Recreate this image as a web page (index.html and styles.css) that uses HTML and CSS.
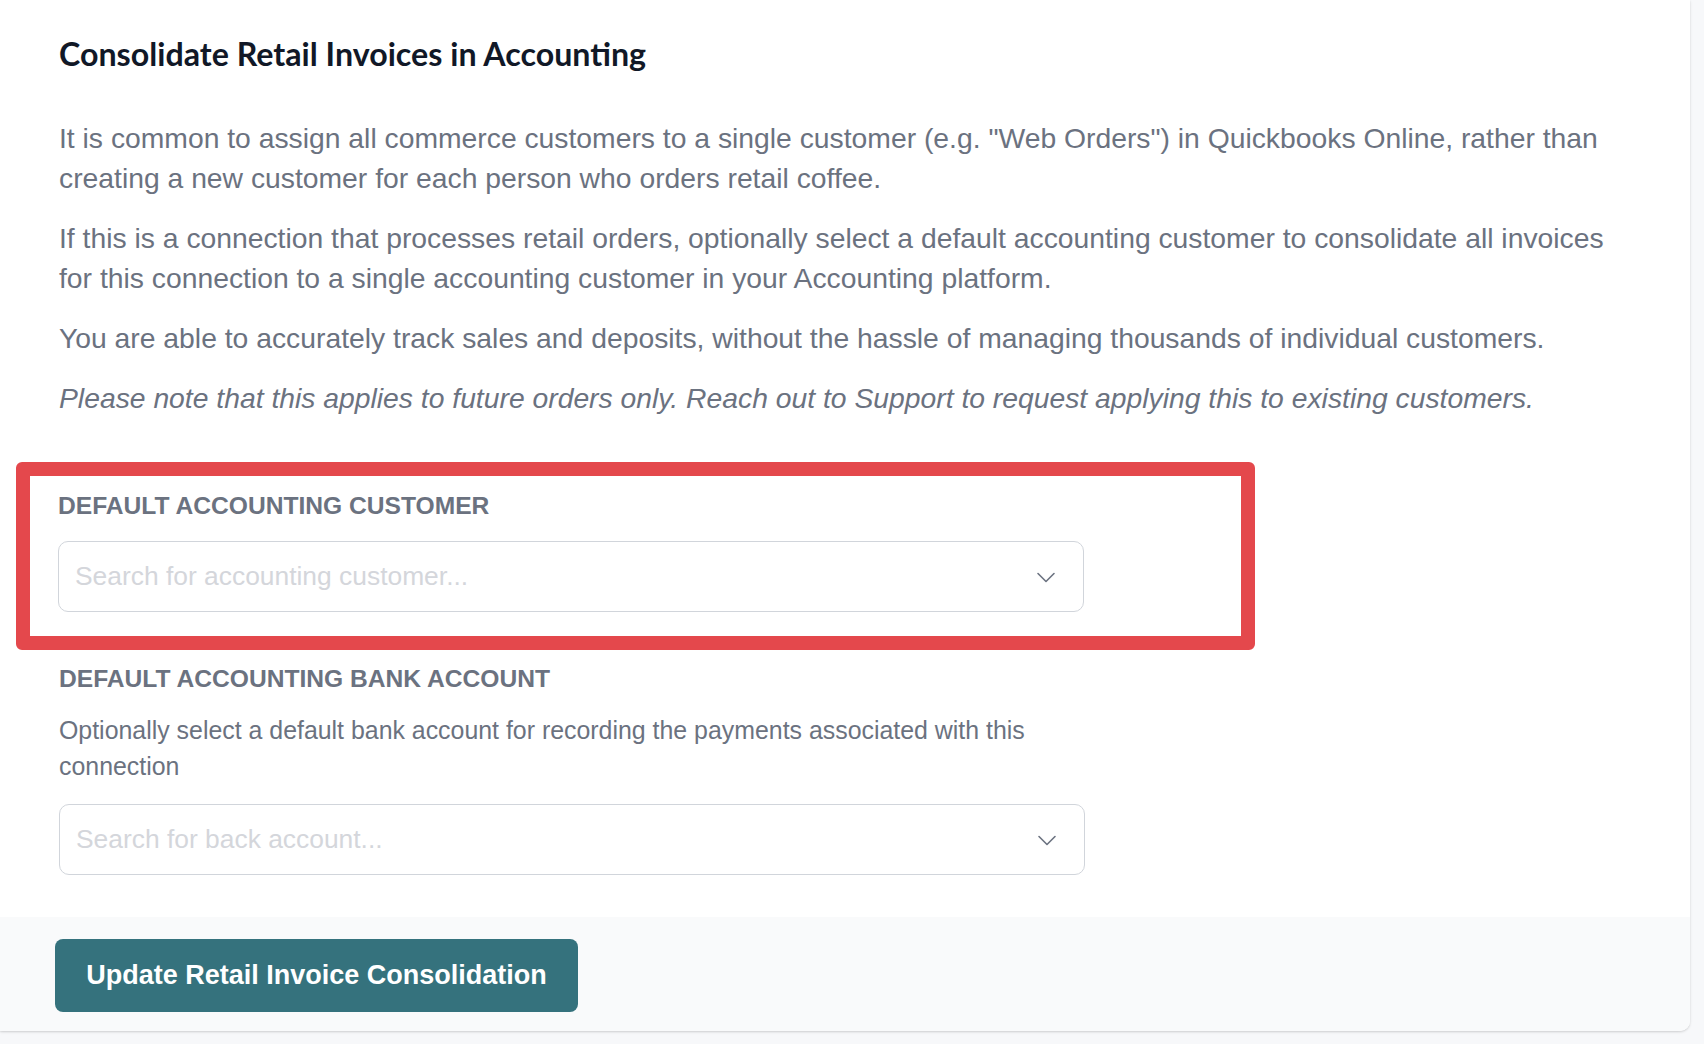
FILE: index.html
```html
<!DOCTYPE html>
<html lang="en">
<head>
<meta charset="utf-8">
<title>Consolidate Retail Invoices in Accounting</title>
<link rel="stylesheet" href="styles.css">
</head>
<body>
<div class="card">
  <div class="card-body">
    <h2 class="title">Consolidate Retail Invoices in Accounting</h2>
    <div class="intro">
      <p>It is common to assign all commerce customers to a single customer (e.g. "Web Orders") in Quickbooks Online, rather than creating a new customer for each person who orders retail coffee.</p>
      <p>If this is a connection that processes retail orders, optionally select a default accounting customer to consolidate all invoices for this connection to a single accounting customer in your Accounting platform.</p>
      <p>You are able to accurately track sales and deposits, without the hassle of managing thousands of individual customers.</p>
      <p class="note">Please note that this applies to future orders only. Reach out to Support to request applying this to existing customers.</p>
    </div>
    <div class="highlight">
      <div class="field-label">DEFAULT ACCOUNTING CUSTOMER</div>
      <div class="select">
        <span class="placeholder">Search for accounting customer...</span>
        <svg class="chevron" width="22" height="22" viewBox="0 0 22 22" fill="none"><path d="M3 7.5l8 8 8-8" stroke="#6b7280" stroke-width="1.6" stroke-linecap="round" stroke-linejoin="round"/></svg>
      </div>
    </div>
    <div class="field">
      <div class="field-label">DEFAULT ACCOUNTING BANK ACCOUNT</div>
      <p class="field-desc">Optionally select a default bank account for recording the payments associated with this connection</p>
      <div class="select">
        <span class="placeholder">Search for back account...</span>
        <svg class="chevron" width="22" height="22" viewBox="0 0 22 22" fill="none"><path d="M3 7.5l8 8 8-8" stroke="#6b7280" stroke-width="1.6" stroke-linecap="round" stroke-linejoin="round"/></svg>
      </div>
    </div>
  </div>
  <div class="card-footer">
    <button class="btn" type="button">Update Retail Invoice Consolidation</button>
  </div>
</div>
</body>
</html>
```
FILE: styles.css
```css
* { box-sizing: border-box; }
html, body { margin: 0; padding: 0; }
body {
  background: #f7f8fa;
  font-family: "Liberation Sans", Arial, sans-serif;
  width: 1704px;
  height: 1044px;
  overflow: hidden;
}
.card {
  width: 1690px;
  background: #ffffff;
  border-radius: 0 0 10px 0;
  box-shadow: 0 1px 3px rgba(0,0,0,0.12), 0 1px 2px rgba(0,0,0,0.06);
  overflow: hidden;
}
.card-body {
  padding: 36px 59px 42px 59px;
}
.title {
  margin: 0 0 46px 0;
  font-family: "Lato", "Noto Sans", sans-serif;
  font-weight: 700;
  font-size: 32.2px;
  line-height: 36px;
  color: #111827;
}
.intro {
  display: flex;
  flex-direction: column;
  gap: 20px;
}
.intro p {
  margin: 0;
  font-size: 28.3px;
  line-height: 40px;
  color: #6b7280;
}
.intro .note { font-style: italic; }
.highlight {
  margin-top: 44px;
  margin-left: -43px;
  width: 1239px;
  border: 14px solid #e4484c;
  border-radius: 6px;
  padding: 16px 0 24px 28px;
}
.field-label {
  font-size: 24.6px;
  line-height: 28px;
  font-weight: 700;
  color: #6b7280;
  margin-bottom: 21px;
}
.field { margin-top: 15px; }
.field .field-label { margin-bottom: 19px; }
.field-desc {
  margin: 0 0 20px 0;
  width: 1026px;
  font-size: 24.9px;
  line-height: 36px;
  color: #6b7280;
}
.select {
  width: 1026px;
  height: 71px;
  border: 1.5px solid #d1d5db;
  border-radius: 10px;
  display: flex;
  align-items: center;
  justify-content: space-between;
  padding: 0 26px 0 16px;
  background: #fff;
}
.placeholder {
  font-size: 26.4px;
  color: #d4d6db;
}
.chevron { display: block; }
.card-footer {
  background: #f9fafb;
  padding: 22px 55px 19px 55px;
}
.btn {
  display: block;
  height: 73px;
  width: 523px;
  border: none;
  border-radius: 8px;
  background: #35727d;
  color: #ffffff;
  font-family: "Liberation Sans", Arial, sans-serif;
  font-weight: 700;
  font-size: 27px;
  padding: 0;
}
```
